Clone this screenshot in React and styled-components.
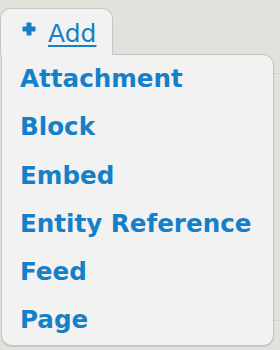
import React from "react";
import styled, { createGlobalStyle } from "styled-components";

const Global = createGlobalStyle`
  html, body { margin: 0; padding: 0; }
  body {
    background: #e1e2dc;
    font-family: "DejaVu Sans", Verdana, sans-serif;
    width: 280px;
    height: 350px;
    overflow: hidden;
  }
`;

const Page = styled.div`
  position: relative;
  padding-top: 8px;
  height: 342px;
`;

const BackdropRule = styled.div`
  position: absolute;
  left: 0;
  right: 0;
  top: 73px;
  height: 246px;
  border-top: 1px solid #d3d3d0;
  border-bottom: 1px solid #d3d3d0;
  z-index: 0;
`;

const Dropdown = styled.div`
  position: relative;
  z-index: 1;
  display: flex;
  flex-direction: column;
  align-items: flex-start;
`;

const Tab = styled.div`
  position: relative;
  z-index: 2;
  display: flex;
  align-items: flex-start;
  gap: 12px;
  box-sizing: border-box;
  width: 113px;
  height: 47px;
  margin-bottom: -1px;
  padding: 10px 0 6px 21px;
  background: #f2f2f2;
  border: 1px solid #c6c6c4;
  border-bottom: none;
  border-radius: 10px 10px 0 0;
`;

const PlusIcon = styled.svg`
  flex: none;
  display: block;
  width: 14px;
  height: 14px;
  margin-top: 3px;
`;

const AddLink = styled.a`
  color: #1580c7;
  font-size: 25px;
  line-height: 30px;
  text-decoration: underline;
  text-decoration-thickness: 2px;
  text-underline-offset: 3px;
  cursor: pointer;
`;

const Panel = styled.ul`
  position: relative;
  z-index: 1;
  box-sizing: border-box;
  width: 273px;
  margin: 0 0 0 1px;
  padding: 0;
  list-style: none;
  background: #f2f2f2;
  border: 1px solid #c4c4c2;
  border-radius: 0 11px 11px 11px;
  box-shadow: 0 1px 1px rgba(0, 0, 0, 0.12);
`;

const Item = styled.li`
  height: 48.3px;
  line-height: 48.3px;
  padding-left: 18px;
  font-size: 24.6px;
  font-weight: bold;
  color: #1580c7;
  white-space: nowrap;
`;

const Plus = () => (
  <PlusIcon viewBox="0 0 14 14">
    <rect x="4.5" y="0.5" width="5" height="13" rx="0.8" fill="#1580c7" />
    <rect x="0.5" y="4.5" width="13" height="5" rx="0.8" fill="#1580c7" />
  </PlusIcon>
);

const items = ["Attachment", "Block", "Embed", "Entity Reference", "Feed", "Page"];

export default function App() {
  return (
    <>
      <Global />
      <Page>
        <BackdropRule />
        <Dropdown>
          <Tab>
            <Plus />
            <AddLink>Add</AddLink>
          </Tab>
          <Panel>
            {items.map((t) => (
              <Item key={t}>{t}</Item>
            ))}
          </Panel>
        </Dropdown>
      </Page>
    </>
  );
}
